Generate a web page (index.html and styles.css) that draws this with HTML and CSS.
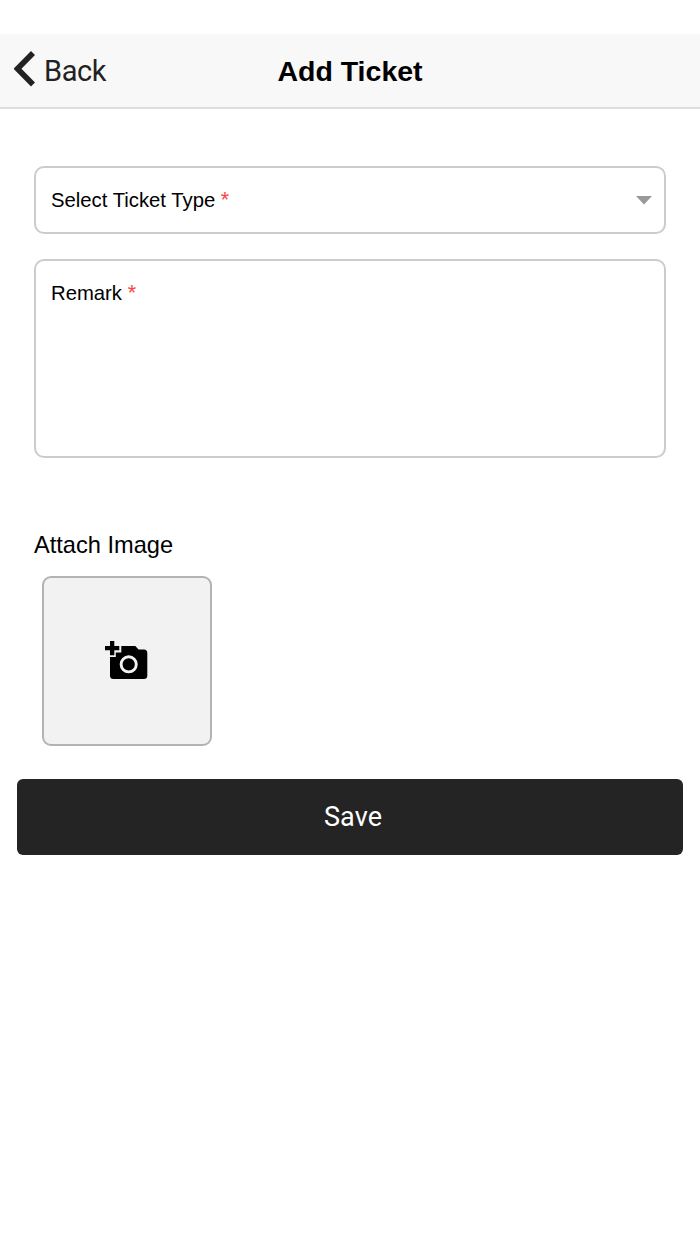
FILE: index.html
```html
<!DOCTYPE html>
<html lang="en">
<head>
    <meta charset="UTF-8">
    <meta name="viewport" content="width=device-width, initial-scale=1.0">
    <title>Add Ticket</title>
    <link rel="stylesheet" href="styles.css">
</head>
<body>
    <header>
        <a class="back" href="#">
            <svg width="22" height="36" viewBox="0 0 22 36">
                <path d="M19 2 L3.500 17.700 L19 33.500" fill="none" stroke="#222" stroke-width="5.600"/>
            </svg>
            <span>Back</span>
        </a>
        <h1>Add Ticket</h1>
    </header>

    <form id="ticketForm">
        <div class="fields">
            <div class="field select-field">
                <span>Select Ticket Type <span class="required">*</span></span>
                <svg width="16" height="9" viewBox="0 0 16 9">
                    <path d="M0 0h16L8 8.500z" fill="#999"/>
                </svg>
            </div>
            <div class="field remark-field">
                <span>Remark <span class="required">*</span></span>
            </div>

            <h2>Attach Image</h2>
            <button type="button" class="attach" aria-label="Attach Image">
                <svg width="44" height="40" viewBox="0 0 44 40">
                    <path d="M5 0h4.300v5h5v4.300h-5v5H5v-5H0V5h5z"/>
                    <path d="M5 16h5.800v-4.500h5.500V5h14l3.200 3.500h5.300q3.500 0 3.500 3.500v22.500q0 3.500-3.500 3.500H8.500Q5 38 5 34.500z"/>
                    <circle cx="23.700" cy="23.300" r="7.600" fill="none" stroke="#f2f2f2" stroke-width="2.900"/>
                </svg>
            </button>
        </div>
        <button type="submit" class="save">Save</button>
    </form>
</body>
</html>
```

FILE: styles.css
```css
* {
    box-sizing: border-box;
}

body {
    margin: 0;
    padding-top: 34px;
    background-color: #fff;
    color: #000;
    font-family: "Liberation Sans", Arial, sans-serif;
}

header {
    display: grid;
    grid-template-columns: 1fr auto 1fr;
    align-items: center;
    height: 75px;
    padding: 0 14px;
    background-color: #f8f8f8;
    border-bottom: 2px solid #dedede;
}

.back {
    display: flex;
    align-items: center;
    gap: 8px;
    color: #222;
    font-family: Roboto, sans-serif;
    font-size: 29px;
    letter-spacing: -0.4px;
    text-decoration: none;
}

.back svg {
    margin-bottom: 3px;
}

h1 {
    margin: 0;
    padding-top: 2px;
    font-size: 28.5px;
}

.fields {
    padding: 57px 34px 0;
}

.field {
    display: flex;
    border: 2px solid #ccc;
    border-radius: 10px;
    padding: 0 12px 0 15px;
    font-size: 20.3px;
}

.select-field {
    align-items: center;
    justify-content: space-between;
    height: 68px;
    margin-bottom: 25px;
}

.remark-field {
    height: 199px;
    padding-top: 20px;
}

.required {
    color: #ff4343;
    font-size: 21.5px;
}

h2 {
    margin: 74px 0 17px;
    font-size: 23.6px;
    font-weight: normal;
    line-height: 27px;
}

.attach {
    display: flex;
    align-items: center;
    justify-content: center;
    width: 170px;
    height: 170px;
    margin-left: 8px;
    padding: 0;
    background-color: #f2f2f2;
    border: 2px solid #b3b3b3;
    border-radius: 9px;
}

.save {
    display: block;
    width: calc(100% - 34px);
    height: 76px;
    margin: 33px 17px 0;
    padding: 0 0 0 6px;
    background-color: #242424;
    border: none;
    border-radius: 6px;
    color: #fff;
    font-family: Roboto, sans-serif;
    font-size: 27px;
    letter-spacing: 0.1px;
}
```
